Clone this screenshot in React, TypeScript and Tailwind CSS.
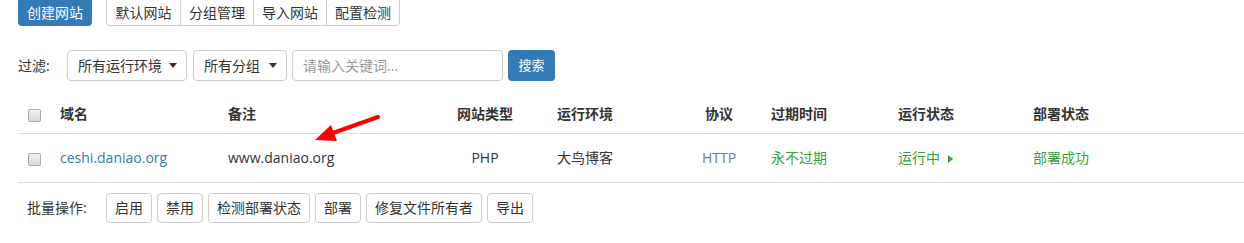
import React from 'react'

const font = "font-['Open_Sans','Noto_Sans_CJK_SC',sans-serif]"

function Checkbox() {
  return (
    <span className="inline-block h-[13px] w-[13px] rounded-[2px] border border-[#a9a9a9] bg-gradient-to-b from-[#f2f2f2] to-[#d8d8d8] align-middle" />
  )
}

function Caret() {
  return <span className="inline-block h-0 w-0 border-x-[4px] border-t-[5px] border-x-transparent border-t-[#333]" />
}

const groupBtns = ['默认网站', '分组管理', '导入网站', '配置检测']
const batchBtns = ['启用', '禁用', '检测部署状态', '部署', '修复文件所有者', '导出']

export default function App() {
  return (
    <div className={`relative h-[243px] w-[1244px] overflow-hidden bg-white pl-[18px] text-[14px] text-[#333] ${font}`}>
      {/* top toolbar */}
      <div className="-mt-[6px] flex items-center">
        <button className="h-[32px] rounded-[4px] bg-[#337ab7] px-[9px] pt-[5px] leading-[20px] text-white">创建网站</button>
        <div className="ml-[14px] flex h-[32px] rounded-[4px] border border-[#ccc]">
          {groupBtns.map((b, i) => (
            <button
              key={b}
              className={`w-[73px] pt-[5px] text-center leading-[20px] text-[#333] ${i > 0 ? 'border-l border-[#ccc]' : ''}`}
            >
              {b}
            </button>
          ))}
        </div>
      </div>

      {/* filter */}
      <div className="mt-[24px] flex h-[31px] items-center">
        <span className="w-[49px] leading-[20px]">过滤:</span>
        <div className="flex h-[31px] w-[120px] items-center justify-between rounded-[4px] border border-[#ccc] pl-[10px] pr-[9px]">
          <span>所有运行环境</span>
          <Caret />
        </div>
        <div className="ml-[6px] flex h-[31px] w-[94px] items-center justify-between rounded-[4px] border border-[#ccc] pl-[10px] pr-[9px]">
          <span>所有分组</span>
          <Caret />
        </div>
        <input
          className="ml-[5px] h-[31px] w-[211px] rounded-[4px] border border-[#ccc] px-[10px] text-[14px] outline-none placeholder:text-[#999]"
          placeholder="请输入关键词..."
        />
        <button className="ml-[5px] h-[31px] w-[47px] rounded-[4px] bg-[#337ab7] text-[13px] text-white">搜索</button>
      </div>

      {/* site table */}
      <table className="mt-[14px] w-[1226px] table-fixed border-collapse">
        <thead>
          <tr className="h-[38px] border-b border-[#ddd] font-bold">
            <th className="w-[32px] pl-[10px] text-left"><Checkbox /></th>
            <th className="w-[168px] pl-[10px] text-left">域名</th>
            <th className="w-[205px] pl-[10px] text-left">备注</th>
            <th className="w-[124px] text-center">网站类型</th>
            <th className="w-[130px] pl-[10px] text-left">运行环境</th>
            <th className="w-[84px] text-center">协议</th>
            <th className="w-[127px] pl-[10px] text-left">过期时间</th>
            <th className="w-[135px] pl-[10px] text-left">运行状态</th>
            <th className="pl-[10px] text-left">部署状态</th>
          </tr>
        </thead>
        <tbody>
          <tr className="h-[49px] border-b border-[#ddd]">
            <td className="pl-[10px]"><Checkbox /></td>
            <td className="pl-[10px] text-[#337ab7]">ceshi.daniao.org</td>
            <td className="pl-[10px]">www.daniao.org</td>
            <td className="text-center">PHP</td>
            <td className="pl-[10px]">大鸟博客</td>
            <td className="text-center text-[#7272b0]">HTTP</td>
            <td className="pl-[10px] text-[#3c9f3c]">永不过期</td>
            <td className="pl-[10px] text-[#3c9f3c]">
              运行中
              <span className="ml-[8px] inline-block h-0 w-0 border-y-[4px] border-l-[5px] border-y-transparent border-l-[#3c9f3c] align-middle" />
            </td>
            <td className="pl-[10px] text-[#3c9f3c]">部署成功</td>
          </tr>
        </tbody>
      </table>

      {/* batch operations */}
      <div className="mt-[10px] flex h-[30px] items-center pl-[9px]">
        <span className="w-[79px] leading-[20px]">批量操作:</span>
        <div className="flex gap-[5px]">
          {batchBtns.map((b) => (
            <button key={b} className="h-[30px] rounded-[4px] border border-[#ccc] px-[8px] leading-[20px] text-[#333]">
              {b}
            </button>
          ))}
        </div>
      </div>

      {/* annotation arrow */}
      <svg className="absolute left-0 top-0" width="1244" height="243">
        <line x1="378" y1="117" x2="330" y2="134" stroke="#ff0000" strokeWidth="4" strokeLinecap="round" />
        <polygon points="315,140 331,125 337,141" fill="#ff0000" />
      </svg>
    </div>
  )
}
